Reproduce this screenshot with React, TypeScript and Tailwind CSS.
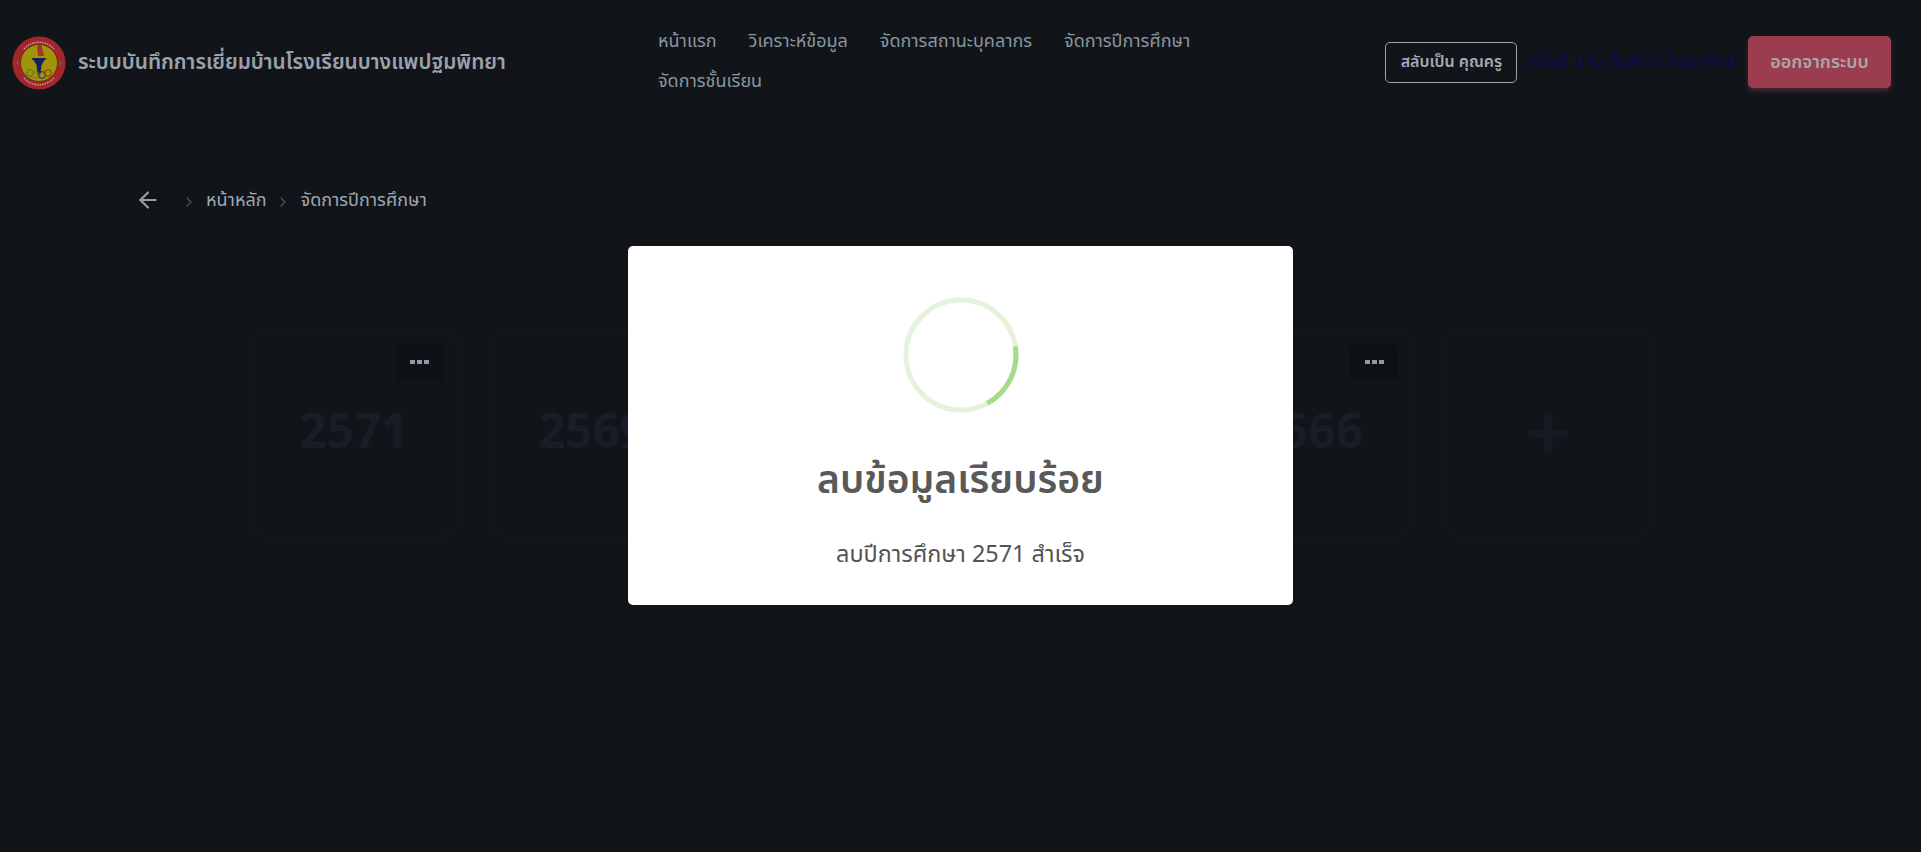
import { Plus, ArrowLeft, ChevronRight } from 'lucide-react';

const font = { fontFamily: '"Noto Sans Thai", "Noto Sans", sans-serif' };

const navItems = ['หน้าแรก', 'วิเคราะห์ข้อมูล', 'จัดการสถานะบุคลากร', 'จัดการปีการศึกษา', 'จัดการชั้นเรียน'];
// the two middle cards sit fully behind the modal, so they carry no label
const years = ['2571', '2569', '', '', '2566'];

function Logo() {
  return (
    <svg viewBox="0 0 54 54" className="w-[54px] h-[54px] shrink-0">
      <circle cx="27" cy="27" r="26.5" fill="#a3262a" />
      <circle cx="27" cy="27" r="18.5" fill="#9f9507" stroke="#5f2a22" strokeWidth="0.8" />
      <path d="M25 11c2-3 4-3 5 0l2 9h-6z" fill="#a8322f" />
      <path d="M21 23h12l-3.5 6-1 9h-3l-1-9z" fill="#14205c" />
      <rect x="20" y="22" width="14" height="2" rx="1" fill="#14205c" />
      <g fill="none" strokeWidth="1">
        <circle cx="18" cy="37" r="3.4" stroke="#3f7a2e" />
        <circle cx="24" cy="39" r="3.4" stroke="#a3662a" />
        <circle cx="30" cy="39" r="3.4" stroke="#1e2a78" />
        <circle cx="36" cy="37" r="3.4" stroke="#a3262a" />
      </g>
      <path d="M3.5 27h4M5.5 25v4M46.5 27h4M48.5 25v4" stroke="#4f8a3a" strokeWidth="0.7" />
      <path d="M12 13a20 20 0 0 1 30 0" fill="none" stroke="#c9a0a0" strokeWidth="1.4" strokeDasharray="1.5 1" />
      <path d="M12 42a20 20 0 0 0 30 0" fill="none" stroke="#c9a0a0" strokeWidth="1.4" strokeDasharray="1.5 1" />
    </svg>
  );
}

function YearCard({ year }: { year: string }) {
  return (
    <div className="relative w-[207.5px] h-[207px] shrink-0 rounded-2xl border border-[#15191f] flex items-center justify-center">
      <div className="absolute top-[10px] right-[11px] w-[52px] h-[42px] rounded-md bg-[#0e1116] border border-[#13171c] flex items-center justify-center gap-[2px]">
        <span className="w-[5px] h-[4px] bg-[#8f99a5]" />
        <span className="w-[5px] h-[4px] bg-[#8f99a5]" />
        <span className="w-[5px] h-[4px] bg-[#8f99a5]" />
      </div>
      <span className="text-[47.5px] font-bold text-[#181d27] leading-none">{year}</span>
    </div>
  );
}

function SuccessModal() {
  return (
    <div className="fixed left-[628px] top-[246px] w-[665px] h-[359px] bg-white rounded-[5px] flex flex-col items-center">
      <svg viewBox="0 0 120 120" className="w-[120px] h-[120px] mt-[49px]">
        <circle cx="60" cy="60" r="55" fill="none" stroke="#e4f3da" strokeWidth="5" />
        <path d="M114.3 51.4A55 55 0 0 1 86.2 108.3" fill="none" stroke="#a5dc86" strokeWidth="5" />
      </svg>
      <h2 className="mt-[40px] text-[39px] leading-[54px] font-semibold text-[#595959]">ลบข้อมูลเรียบร้อย</h2>
      <p className="mt-[30px] text-[23.4px] leading-[32px] text-[#545454]">ลบปีการศึกษา 2571 สำเร็จ</p>
    </div>
  );
}

export default function App() {
  return (
    <div className="h-screen overflow-hidden bg-[#11151a]" style={font}>
      <header className="flex items-start h-[124px] pt-[21px]">
        <div className="w-[642px] shrink-0 flex items-center gap-3 pl-3 pt-[15px]">
          <Logo />
          <span className="text-[20.8px] font-semibold text-[#9ba2ab] leading-6">ระบบบันทึกการเยี่ยมบ้านโรงเรียนบางแพปฐมพิทยา</span>
        </div>
        <nav className="w-[590px] flex flex-wrap">
          {navItems.map((item) => (
            <a key={item} className="px-4 h-10 flex items-center text-[18px] text-[#8a95a0]">{item}</a>
          ))}
        </nav>
        <div className="ml-auto flex items-center pr-[30px] pt-[15px]">
          <button className="w-[132px] h-[41px] rounded-[5px] border border-[#a0a3a8] text-[16px] font-semibold text-[#a3acb8]">สลับเป็น คุณครู</button>
          <span className="ml-[11px] text-[18.2px] text-[#0b0b50]">สวัสดี นาย ทินภัทร จินดารัตน์</span>
          <button className="ml-[11px] w-[143px] h-[52px] rounded-[5px] bg-[#9c3d4f] text-[18px] font-semibold text-[#a8a8a8] shadow-[0_3px_4px_rgba(156,61,79,0.4)]">ออกจากระบบ</button>
        </div>
      </header>

      <main>
        <div className="flex items-center h-[30px] pl-[135px] mt-[61px] text-[18px] text-[#a0a8b2]">
          <ArrowLeft className="w-[26px] h-[26px] text-[#9a9ea3]" />
          <ChevronRight className="ml-[20px] mt-1 w-[16px] h-[16px] text-[#4a4e54]" />
          <span className="ml-[9px]">หน้าหลัก</span>
          <ChevronRight className="ml-[8px] mt-1 w-[16px] h-[16px] text-[#4a4e54]" />
          <span className="ml-[10px]">จัดการปีการศึกษา</span>
        </div>

        <div className="flex gap-[31.2px] pl-[250px] mt-[115px]">
          {years.map((y, i) => (
            <YearCard key={i} year={y} />
          ))}
          <div className="ml-[2px] w-[207px] h-[207px] shrink-0 rounded-2xl border border-[#15191f] flex items-center justify-center">
            <Plus className="w-[55px] h-[55px] text-[#141b24]" strokeWidth={3.5} />
          </div>
        </div>
      </main>

      <SuccessModal />
    </div>
  );
}
